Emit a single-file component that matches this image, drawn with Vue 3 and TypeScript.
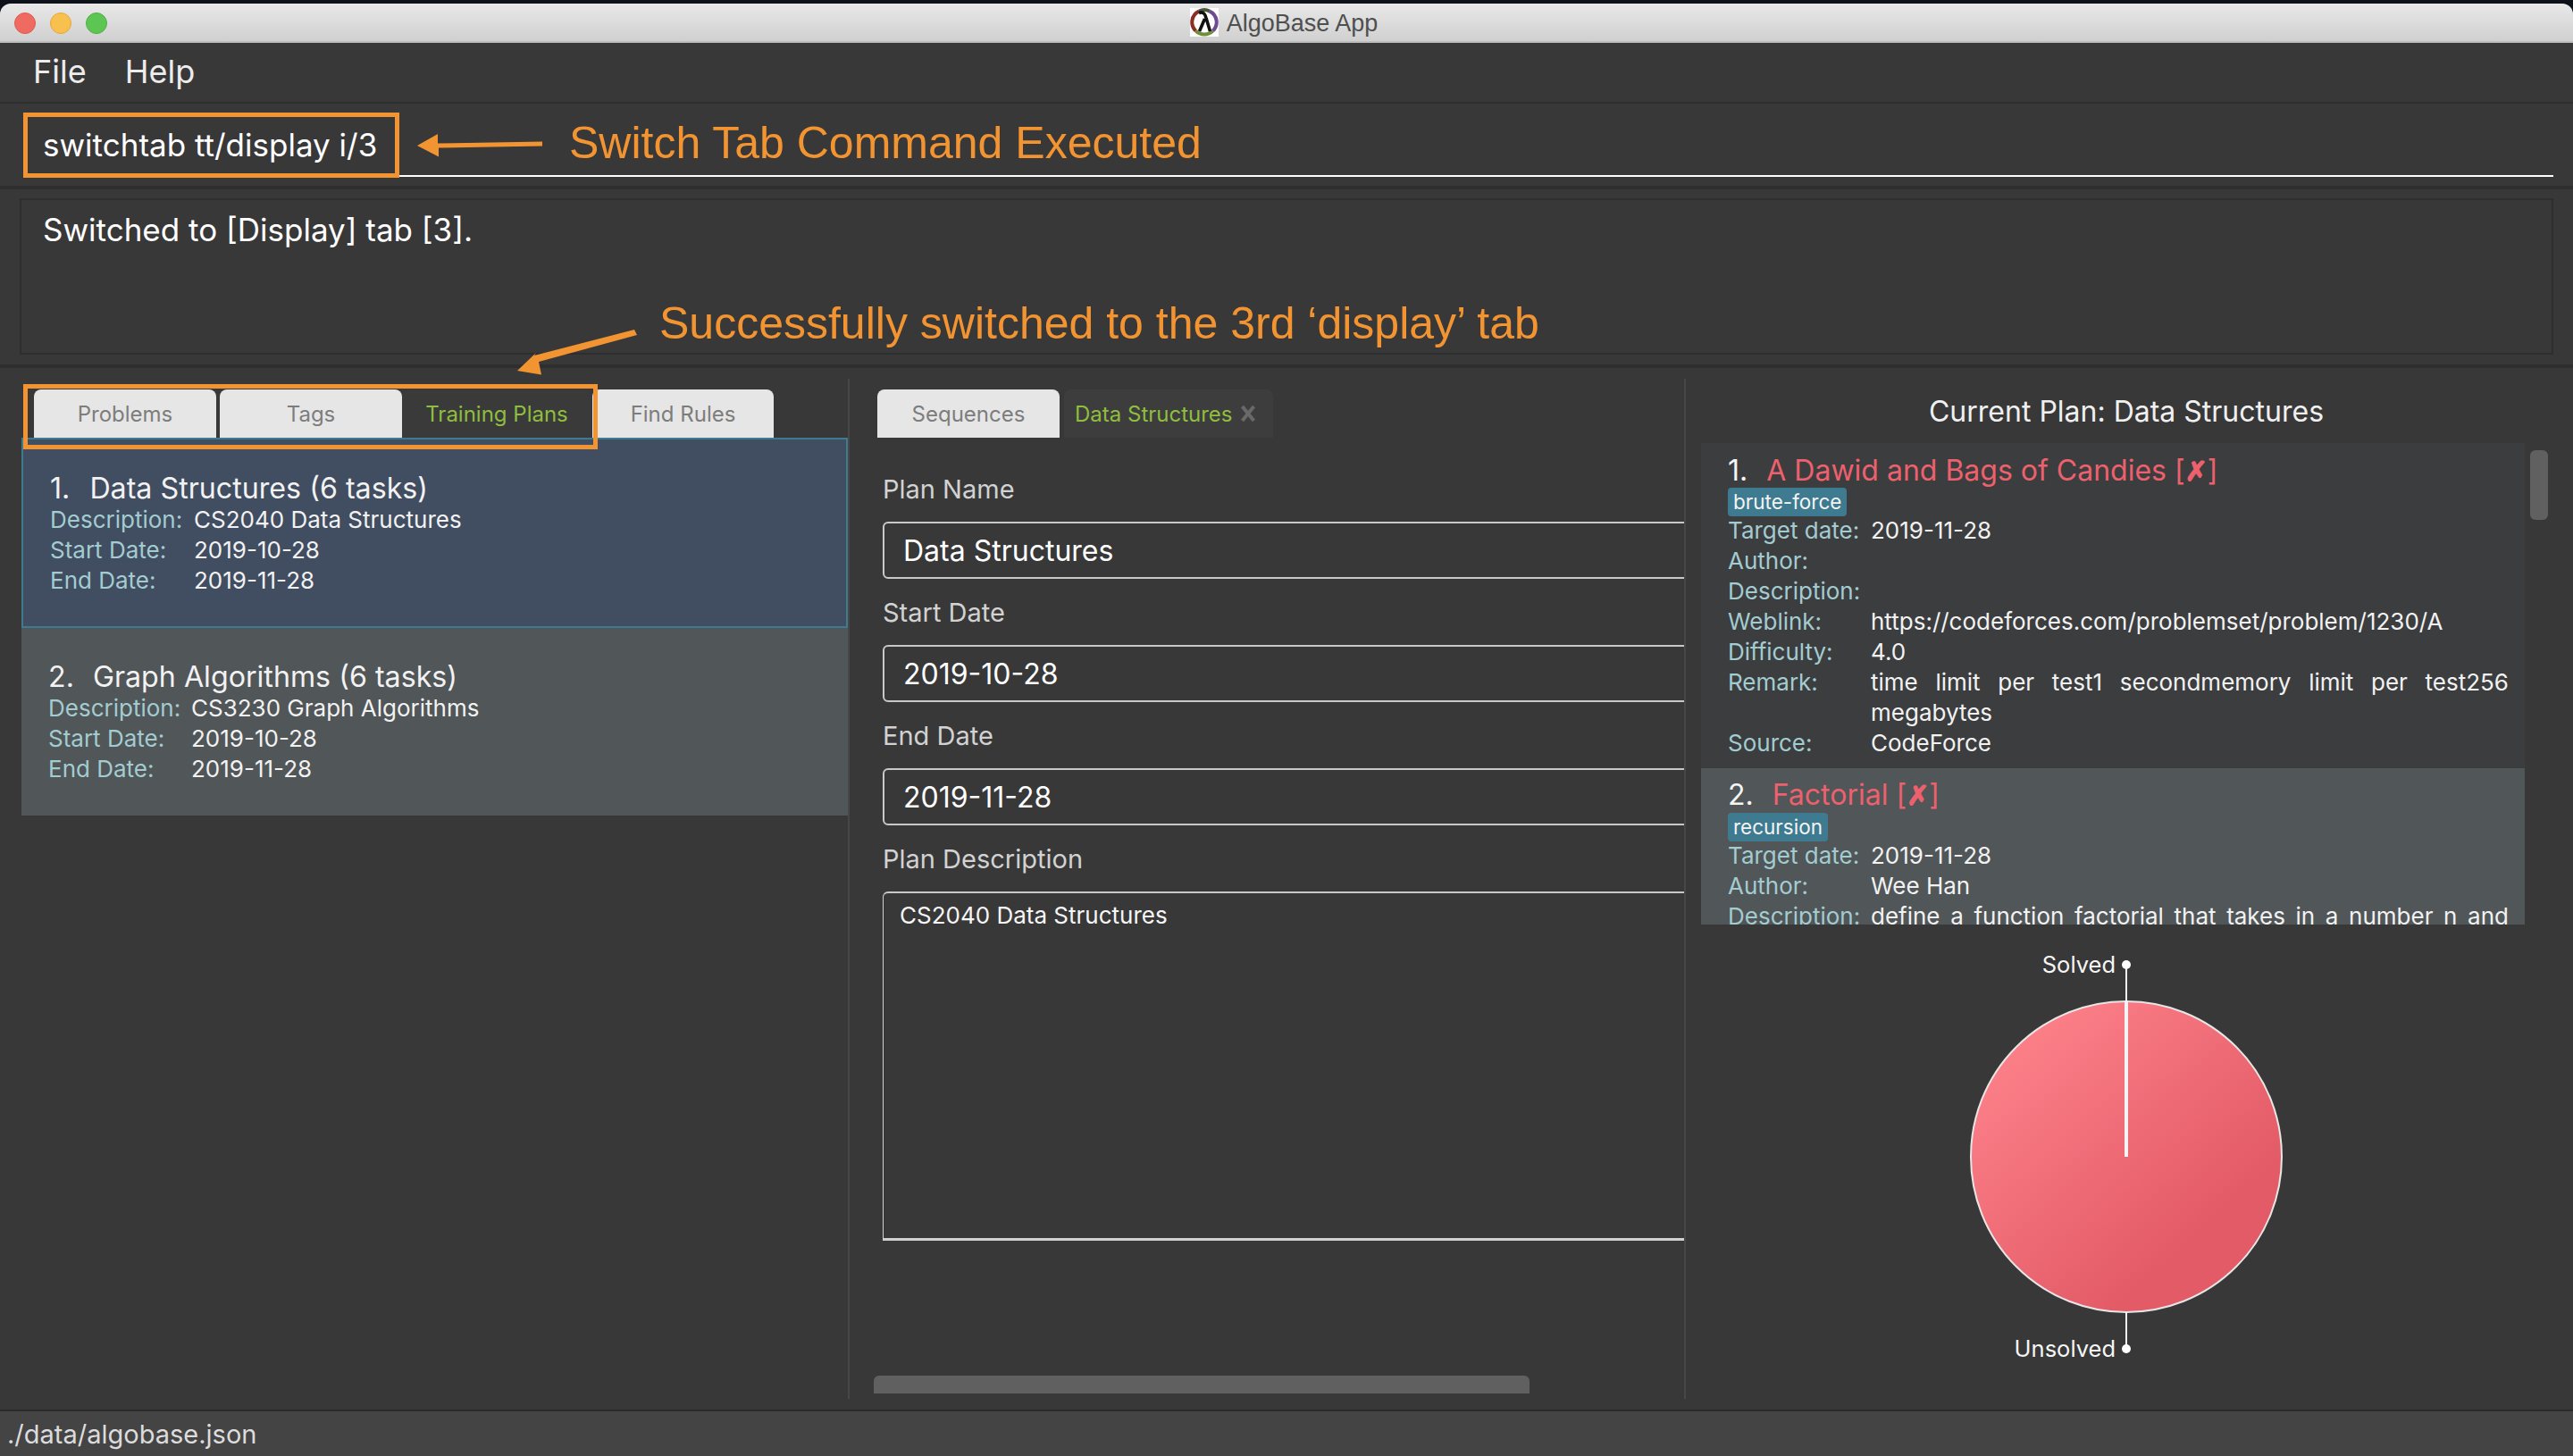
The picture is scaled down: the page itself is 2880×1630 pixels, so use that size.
<script setup lang="ts">
type Field = { label: string; value: string; fill?: boolean }

const plans = [
  {
    num: '1.',
    name: 'Data Structures (6 tasks)',
    selected: true,
    fields: [
      { label: 'Description:', value: 'CS2040 Data Structures' },
      { label: 'Start Date:', value: '2019-10-28' },
      { label: 'End Date:', value: '2019-11-28' },
    ] as Field[],
  },
  {
    num: '2.',
    name: 'Graph Algorithms (6 tasks)',
    selected: false,
    fields: [
      { label: 'Description:', value: 'CS3230 Graph Algorithms' },
      { label: 'Start Date:', value: '2019-10-28' },
      { label: 'End Date:', value: '2019-11-28' },
    ] as Field[],
  },
]

const formFields = [
  { label: 'Plan Name', value: 'Data Structures' },
  { label: 'Start Date', value: '2019-10-28' },
  { label: 'End Date', value: '2019-11-28' },
]

const tasks = [
  {
    num: '1.',
    name: 'A Dawid and Bags of Candies',
    tag: 'brute-force',
    odd: false,
    fields: [
      { label: 'Target date:', value: '2019-11-28' },
      { label: 'Author:', value: '' },
      { label: 'Description:', value: '' },
      { label: 'Weblink:', value: 'https://codeforces.com/problemset/problem/1230/A' },
      { label: 'Difficulty:', value: '4.0' },
      { label: 'Remark:', value: 'time limit per test1 secondmemory limit per test256 megabytes' },
      { label: 'Source:', value: 'CodeForce' },
    ] as Field[],
  },
  {
    num: '2.',
    name: 'Factorial',
    tag: 'recursion',
    odd: true,
    fields: [
      { label: 'Target date:', value: '2019-11-28' },
      { label: 'Author:', value: 'Wee Han' },
      { label: 'Description:', value: 'define a function factorial that takes in a number n and', fill: true },
    ] as Field[],
  },
]
</script>

<template>
  <div class="page">
    <div class="window">
      <header class="titlebar">
        <div class="lights">
          <span class="light red"></span>
          <span class="light yellow"></span>
          <span class="light green"></span>
        </div>
        <svg class="logo" width="32" height="32" viewBox="0 0 32 32">
          <rect width="32" height="32" fill="#fff" />
          <path d="M10 3.600A13.500 13.500 0 0 0 6.500 25.600" fill="none" stroke="#8a2f26" stroke-width="4" />
          <path d="M6.500 25.600A13.500 13.500 0 0 0 25.500 25.600" fill="none" stroke="#6f8f3a" stroke-width="4" />
          <path d="M25.500 25.600A13.500 13.500 0 0 0 22 3.600" fill="none" stroke="#6c4a94" stroke-width="4" />
          <path d="M10 3.600A13.500 13.500 0 0 1 22 3.600" fill="none" stroke="#4c5a3a" stroke-width="4" />
          <path d="M10 5.500C15 3.500 17 7 18 11L22.500 26M16.500 12L10.500 26" fill="none" stroke="#111" stroke-width="3.600" />
        </svg>
        <span class="app-name">AlgoBase App</span>
      </header>

      <nav class="menu">
        <span>File</span>
        <span>Help</span>
      </nav>

      <section class="command">
        <div class="command-field">switchtab tt/display i/3</div>
      </section>

      <section class="result">
        <div class="result-box">Switched to [Display] tab [3].</div>
      </section>

      <main class="main">
        <div class="col left">
          <div class="tabs left-tabs">
            <div class="tab">Problems</div>
            <div class="tab">Tags</div>
            <div class="tab active wide">Training Plans</div>
            <div class="tab narrow-gap">Find Rules</div>
          </div>
          <article
            v-for="plan in plans"
            :key="plan.num"
            class="plan-card"
            :class="{ selected: plan.selected }"
          >
            <div class="plan-title">
              <span>{{ plan.num }}</span>
              <span>{{ plan.name }}</span>
            </div>
            <div v-for="f in plan.fields" :key="f.label" class="field">
              <span class="field-label">{{ f.label }}</span>
              <span class="field-value">{{ f.value }}</span>
            </div>
          </article>
        </div>

        <div class="col mid">
          <div class="tabs">
            <div class="tab">Sequences</div>
            <div class="tab active closable">
              <span>Data Structures</span>
              <svg width="18" height="20" viewBox="0 0 18 20">
                <path d="M2.500 2L15.500 18M15.500 2L2.500 18" stroke="#696969" stroke-width="4" fill="none" />
              </svg>
            </div>
          </div>
          <div class="form">
            <template v-for="f in formFields" :key="f.label">
              <div class="form-label">{{ f.label }}</div>
              <div class="form-input">{{ f.value }}</div>
            </template>
            <div class="form-label">Plan Description</div>
            <div class="form-area">CS2040 Data Structures</div>
          </div>
          <div class="hscroll"></div>
        </div>

        <div class="col right">
          <div class="current">Current Plan: Data Structures</div>
          <div class="task-wrap">
            <div class="task-list">
              <article v-for="t in tasks" :key="t.num" class="task" :class="{ odd: t.odd }">
                <div class="task-title">
                  <span class="task-num">{{ t.num }}</span>
                  <span class="task-name">{{ t.name }} [<span class="cross">✗</span>]</span>
                </div>
                <span class="tag">{{ t.tag }}</span>
                <div v-for="f in t.fields" :key="f.label" class="field">
                  <span class="field-label">{{ f.label }}</span>
                  <span class="field-value" :class="{ fill: f.fill }">{{ f.value }}</span>
                </div>
              </article>
            </div>
            <div class="vthumb"></div>
          </div>
          <svg class="chart" width="948" height="460" viewBox="0 0 948 460">
            <defs>
              <linearGradient id="pie" x1="0.12" y1="0.1" x2="0.72" y2="0.75">
                <stop offset="0" stop-color="#fd818a" />
                <stop offset="1" stop-color="#e35b67" />
              </linearGradient>
            </defs>
            <circle cx="476" cy="225" r="174" fill="url(#pie)" stroke="#e6e6e6" stroke-width="2" />
            <path d="M476 225V51" stroke="#f4f4f4" stroke-width="4" />
            <path d="M476 52V10M476 399V440" stroke="#f4f4f4" stroke-width="2" />
            <circle cx="476" cy="10" r="5" fill="#fff" />
            <circle cx="476" cy="440" r="5" fill="#fff" />
            <text x="464" y="19" text-anchor="end" class="chart-label">Solved</text>
            <text x="464" y="449" text-anchor="end" class="chart-label">Unsolved</text>
          </svg>
        </div>
      </main>

      <footer class="status">./data/algobase.json</footer>
    </div>

    <div class="mark mark-command"></div>
    <div class="mark mark-tabs"></div>
    <svg class="arrows" width="2880" height="1630" viewBox="0 0 2880 1630">
      <path d="M607 158.500L490 160.500V150L467 163L491 175.500V165.500L607 163.500Z" fill="#f39432" />
      <path d="M710 369L598 398L600 395L579 415L606 419.500L603 405L713 375Z" fill="#f39432" />
    </svg>
    <div class="note note-command">Switch Tab Command Executed</div>
    <div class="note note-tab">Successfully switched to the 3rd ‘display’ tab</div>
  </div>
</template>

<style scoped>
.page {
  position: relative;
  width: 2880px;
  height: 1630px;
  padding-top: 4px;
  box-sizing: border-box;
  background: #0d1119;
  overflow: hidden;
  font-family: Inter, "Liberation Sans", sans-serif;
  color: #f2f2f2;
}

.window {
  height: 1626px;
  display: flex;
  flex-direction: column;
  background: #383838;
  border-radius: 12px 12px 0 0;
  overflow: hidden;
}

.titlebar {
  position: relative;
  height: 44px;
  flex: none;
  box-sizing: border-box;
  display: flex;
  align-items: center;
  justify-content: center;
  gap: 9px;
  padding-right: 6px;
  background: linear-gradient(#e8e8e8, #d0d0d0);
  border-bottom: 2px solid #bdbdbd;
}

.lights {
  position: absolute;
  left: 16px;
  top: 10px;
  display: flex;
  gap: 16px;
}

.light {
  width: 24px;
  height: 24px;
  border-radius: 50%;
  box-sizing: border-box;
}
.red { background: #ef6a60; border: 1px solid #dc5a50; }
.yellow { background: #f8c04f; border: 1px solid #e2a83c; }
.green { background: #5dc652; border: 1px solid #4eaf45; }

.app-name {
  padding-top: 2px;
  font-family: "Liberation Sans", sans-serif;
  font-size: 27px;
  color: #4f4f4f;
}

.menu {
  height: 68px;
  flex: none;
  box-sizing: border-box;
  display: flex;
  align-items: center;
  gap: 43px;
  padding: 0 0 2px 37px;
  font-size: 36px;
  color: #ececec;
  border-bottom: 2px solid #2e2e2e;
}

.command {
  height: 96px;
  flex: none;
  box-sizing: border-box;
  padding: 0 22px 0 26px;
  border-bottom: 4px solid #2e2e2e;
}

.command-field {
  height: 82px;
  box-sizing: border-box;
  padding: 12px 0 0 22px;
  display: flex;
  align-items: center;
  font-size: 35px;
  color: #fff;
  border-bottom: 2px solid #fff;
}

.result {
  height: 200px;
  flex: none;
  box-sizing: border-box;
  padding: 10px 22px 11px;
  border-bottom: 4px solid #2e2e2e;
}

.result-box {
  height: 175px;
  box-sizing: border-box;
  padding: 11px 24px;
  border: 2px solid #2e2e2e;
  font-size: 35px;
  line-height: 44px;
  color: #fff;
}

.main {
  flex: 1;
  min-height: 0;
  display: flex;
  padding: 12px 0;
  box-sizing: border-box;
}

.col {
  height: 100%;
  box-sizing: border-box;
  flex: none;
}

.left {
  width: 951px;
  padding-left: 24px;
  border-right: 2px solid #474747;
}

.mid {
  width: 936px;
  padding: 12px 0 0 31px;
  border-right: 2px solid #474747;
  overflow: hidden;
  display: flex;
  flex-direction: column;
}

.right {
  flex: 1;
  padding-left: 17px;
}

.tabs {
  height: 54px;
  display: flex;
  gap: 4px;
}

.left-tabs {
  margin: 12px 0 0 14px;
}

.tab {
  width: 204px;
  height: 54px;
  box-sizing: border-box;
  display: flex;
  align-items: center;
  justify-content: center;
  border-radius: 8px 8px 0 0;
  background: #e6e6e6;
  color: #7d7d7d;
  font-size: 24px;
}

.tab.active {
  background: #3a3a3a;
  color: #8fbd3e;
}

.tab.wide {
  width: 212px;
  margin-left: -4px;
}

.tab.narrow-gap {
  margin-left: -3px;
  width: 203px;
}

.tab.closable {
  width: 234px;
  margin-left: 1px;
  background: #3d3d3d;
  justify-content: flex-start;
  gap: 8px;
  padding-left: 12px;
}

.plan-card {
  width: 925px;
  height: 210px;
  box-sizing: border-box;
  padding: 35px 0 0 30px;
  background: #515658;
}

.plan-card.selected {
  height: 213px;
  padding: 35px 0 0 30px;
  background: #414d60;
  border: 2px solid #3e7b91;
}

.plan-title {
  height: 38px;
  display: flex;
  gap: 21px;
  line-height: 40px;
  font-size: 32.200px;
  color: #f2f2f2;
}

.plan-card.selected .plan-title {
  gap: 22px;
}

.field {
  display: grid;
  grid-template-columns: 160px 1fr;
  font-size: 26px;
  line-height: 34px;
}

.plan-card.selected .field {
  grid-template-columns: 161px 1fr;
}

.field-label {
  color: #a3ccd1;
}

.field-value {
  color: #f2f2f2;
  text-align: justify;
}

.field-value.fill {
  text-align-last: justify;
}

.form {
  width: 1100px;
  margin: 40px 0 0 6px;
}

.form-label {
  height: 36px;
  line-height: 36px;
  margin-bottom: 18px;
  font-size: 29px;
  color: #d2d2d2;
}

.form-input {
  height: 64px;
  box-sizing: border-box;
  margin-bottom: 20px;
  padding-left: 21px;
  display: flex;
  align-items: center;
  border: 2px solid #c8c8c8;
  border-radius: 6px;
  font-size: 32px;
  color: #fff;
}

.form-area {
  height: 391px;
  box-sizing: border-box;
  padding: 8px 0 0 18px;
  border-left: 1px solid #d0d0d0;
  border-top: 2px solid #c8c8c8;
  border-bottom: 3px solid #d0d0d0;
  border-top-left-radius: 6px;
  font-size: 26px;
  line-height: 34px;
  color: #f6f6f6;
}

.hscroll {
  width: 734px;
  height: 20px;
  margin: auto 0 6px -4px;
  flex: none;
  background: #606060;
  border-radius: 6px 6px 0 0;
}

.current {
  width: 952px;
  height: 40px;
  margin: 17px 0 15px;
  line-height: 40px;
  text-align: center;
  font-size: 32px;
  color: #f0f0f0;
}

.task-wrap {
  display: flex;
  gap: 6px;
}

.task-list {
  width: 922px;
  height: 539px;
  overflow: hidden;
}

.task {
  height: 364px;
  box-sizing: border-box;
  padding: 11px 18px 0 30px;
  background: #3c3d3f;
}

.task.odd {
  padding-top: 10px;
  background: #515658;
}

.task-title {
  height: 40px;
  display: flex;
  gap: 21px;
  line-height: 40px;
  font-size: 32px;
}

.task-num {
  color: #f4f4f4;
}

.task-name {
  color: #ec616d;
}

.cross {
  font-family: "DejaVu Sans", sans-serif;
  font-size: 30px;
  -webkit-text-stroke: 1.500px #ec616d;
}

.tag {
  display: block;
  width: fit-content;
  height: 32px;
  margin-bottom: -1px;
  padding: 0 6px;
  line-height: 32px;
  border-radius: 4px;
  background: #3e7b91;
  font-size: 22.500px;
  color: #f4f4f4;
}

.task:first-child .tag {
  margin-top: -1px;
}

.vthumb {
  width: 20px;
  height: 78px;
  margin-top: 8px;
  background: #606060;
  border-radius: 6px;
}

.chart {
  display: block;
  margin-top: 35px;
}

.chart-label {
  font-family: Inter, "Liberation Sans", sans-serif;
  font-size: 25.500px;
  fill: #f6f6f6;
}

.status {
  height: 52px;
  flex: none;
  box-sizing: border-box;
  padding: 1px 0 0 8px;
  display: flex;
  align-items: center;
  background: #444;
  border-top: 2px solid #2a2a2a;
  font-size: 29px;
  color: #dcdcdc;
}

.mark {
  position: absolute;
  box-sizing: border-box;
  border: 5px solid #f39432;
}

.mark-command {
  left: 26px;
  top: 126px;
  width: 421px;
  height: 73px;
}

.mark-tabs {
  left: 26px;
  top: 430px;
  width: 643px;
  height: 73px;
}

.arrows {
  position: absolute;
  left: 0;
  top: 0;
  pointer-events: none;
}

.note {
  position: absolute;
  font-family: "Liberation Sans", sans-serif;
  font-size: 50px;
  line-height: 60px;
  color: #f39432;
  white-space: nowrap;
}

.note-command {
  left: 637px;
  top: 130px;
}

.note-tab {
  left: 738px;
  top: 332px;
}
</style>

<style>
html, body {
  margin: 0;
  background: #0d1119;
}
</style>
